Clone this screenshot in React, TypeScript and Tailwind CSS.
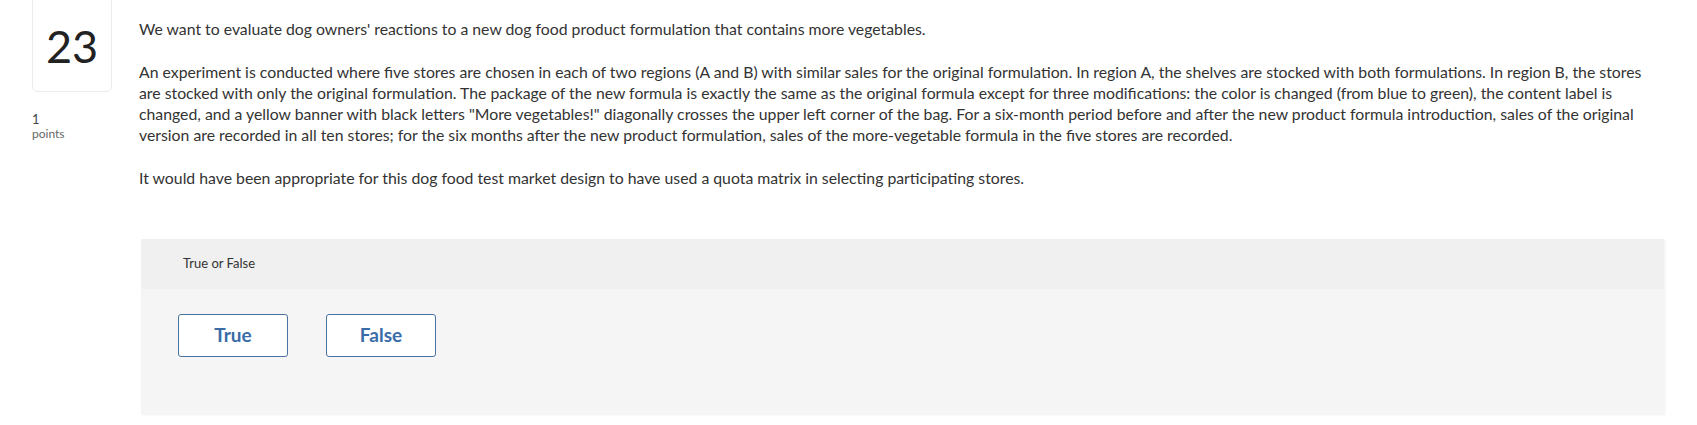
export default function App() {
  return (
    <div className="min-h-[425px] w-full bg-white font-['Lato',sans-serif] text-[#333]">
      <div className="flex pl-[32px] pr-[33px]">
        <div className="w-[80px] shrink-0">
          <div className="-mt-[10px] flex h-[102px] w-[80px] items-center justify-center rounded-[6px] border border-[#ececec] pt-[10px]">
            <span className="text-[45px] leading-none text-[#222]">23</span>
          </div>
          <div className="mt-[20px] text-[13px] leading-[15px] text-[#444]">1</div>
          <div className="text-[12px] leading-[14px] text-[#666]">points</div>
        </div>
        <div className="ml-[27px] flex-1">
          <div className="pt-[18px] text-[15.8px] leading-[21px]">
            <p>
              We want to evaluate dog owners' reactions to a new dog food product formulation that contains more vegetables.
            </p>
            <p className="mt-[22px]">
              An experiment is conducted where five stores are chosen in each of two regions (A and B) with similar sales for the
              original formulation. In region A, the shelves are stocked with both formulations. In region B, the stores are stocked
              with only the original formulation. The package of the new formula is exactly the same as the original formula except
              for three modifications: the color is changed (from blue to green), the content label is changed, and a yellow banner
              with black letters "More vegetables!" diagonally crosses the upper left corner of the bag. For a six-month period
              before and after the new product formula introduction, sales of the original version are recorded in all ten stores;
              for the six months after the new product formulation, sales of the more-vegetable formula in the five stores are
              recorded.
            </p>
            <p className="mt-[22px]">
              It would have been appropriate for this dog food test market design to have used a quota matrix in selecting
              participating stores.
            </p>
          </div>
          <div className="ml-[2px] mt-[51px] shadow-[1px_1px_2px_rgba(0,0,0,0.06)]">
            <div className="flex h-[50px] items-center bg-[#f0f0f0] pl-[42px] text-[13px] text-[#333]">True or False</div>
            <div className="flex h-[125px] gap-[38px] bg-[#f5f5f5] pl-[37px] pt-[25px]">
              <button className="h-[43px] w-[110px] rounded-[3px] border border-[#4a72a0] bg-white text-[19px] font-bold text-[#3a6ca8]">
                True
              </button>
              <button className="h-[43px] w-[110px] rounded-[3px] border border-[#4a72a0] bg-white text-[19px] font-bold text-[#3a6ca8]">
                False
              </button>
            </div>
          </div>
        </div>
      </div>
    </div>
  );
}
